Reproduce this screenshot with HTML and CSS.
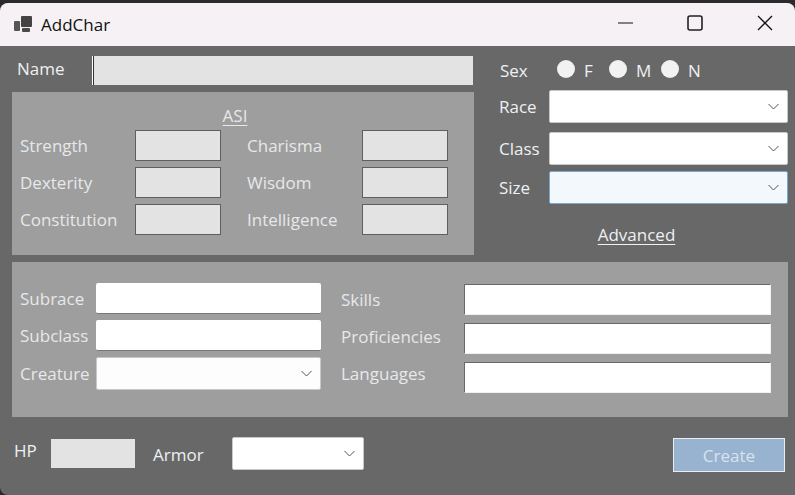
FILE: index.html
```html
<!DOCTYPE html>
<html>
<head>
    <title>AddChar</title>
    <link rel="stylesheet" href="styles.css">
</head>
<body>
    <div class="window">
        <div class="titlebar">
            <svg class="app-icon" width="18" height="16" viewBox="0 0 18 16">
                <rect x="0" y="5" width="6" height="10" rx="1" fill="#555"/>
                <rect x="7" y="0" width="11" height="11" rx="1" fill="#444"/>
                <rect x="8" y="12" width="8" height="4" rx="1" fill="#4a4a4a"/>
            </svg>
            <span class="app-name">AddChar</span>
            <div class="win-buttons">
                <svg width="16" height="16" viewBox="0 0 16 16"><path d="M1 8H16" stroke="#111" stroke-width="1.2" fill="none"/></svg>
                <svg width="16" height="16" viewBox="0 0 16 16"><rect x="1" y="1" width="14" height="14" rx="2" stroke="#222" stroke-width="1.6" fill="none"/></svg>
                <svg width="16" height="16" viewBox="0 0 16 16"><path d="M1 1L15 15M15 1L1 15" stroke="#111" stroke-width="1.3" fill="none"/></svg>
            </div>
        </div>

        <div class="form">
            <div class="top">
                <div class="left">
                    <div class="name-row">
                        <span class="name-label">Name</span>
                        <input class="name-input" type="text">
                    </div>
                    <div class="panel asi">
                        <div class="asi-title"><span class="link">ASI</span></div>
                        <div class="asi-grid">
                            <span>Strength</span><input class="box" type="text">
                            <span>Charisma</span><input class="box" type="text">
                            <span>Dexterity</span><input class="box" type="text">
                            <span>Wisdom</span><input class="box" type="text">
                            <span>Constitution</span><input class="box" type="text">
                            <span>Intelligence</span><input class="box" type="text">
                        </div>
                    </div>
                </div>

                <div class="right">
                    <div class="sex-row">
                        <span class="sex-label">Sex</span>
                        <div class="radio-item"><i class="radio"></i>F</div>
                        <div class="radio-item"><i class="radio"></i>M</div>
                        <div class="radio-item"><i class="radio"></i>N</div>
                    </div>
                    <div class="pick-row">
                        <span class="pick-label">Race</span>
                        <div class="combo">
                            <svg width="11" height="7" viewBox="0 0 11 7"><path d="M0.5 1L5.5 6L10.5 1" stroke="#555" fill="none"/></svg>
                        </div>
                    </div>
                    <div class="pick-row class-row">
                        <span class="pick-label">Class</span>
                        <div class="combo">
                            <svg width="11" height="7" viewBox="0 0 11 7"><path d="M0.5 1L5.5 6L10.5 1" stroke="#555" fill="none"/></svg>
                        </div>
                    </div>
                    <div class="pick-row size-row">
                        <span class="pick-label">Size</span>
                        <div class="combo combo-hover">
                            <svg width="11" height="7" viewBox="0 0 11 7"><path d="M0.5 1L5.5 6L10.5 1" stroke="#555" fill="none"/></svg>
                        </div>
                    </div>
                    <div class="advanced"><span class="link">Advanced</span></div>
                </div>
            </div>

            <div class="panel lower">
                <div class="lower-left">
                    <span>Subrace</span><input class="plain" type="text">
                    <span>Subclass</span><input class="plain" type="text">
                    <span>Creature</span>
                    <div class="combo">
                        <svg width="11" height="7" viewBox="0 0 11 7"><path d="M0.5 1L5.5 6L10.5 1" stroke="#555" fill="none"/></svg>
                    </div>
                </div>
                <div class="lower-labels">
                    <span>Skills</span>
                    <span>Proficiencies</span>
                    <span>Languages</span>
                </div>
                <div class="lower-inputs">
                    <input class="sunken" type="text">
                    <input class="sunken" type="text">
                    <input class="sunken" type="text">
                </div>
            </div>

            <div class="bottom">
                <span class="hp-label">HP</span>
                <input class="hp-input" type="text">
                <span class="armor-label">Armor</span>
                <div class="combo armor-combo">
                    <svg width="11" height="7" viewBox="0 0 11 7"><path d="M0.5 1L5.5 6L10.5 1" stroke="#555" fill="none"/></svg>
                </div>
                <button class="create">Create</button>
            </div>
        </div>
    </div>
</body>
</html>
```

FILE: styles.css
```css
* {
    box-sizing: border-box;
}

html {
    background: #2b2b2b;
}

body {
    margin: 0;
    font-family: "Open Sans", "Noto Sans", sans-serif;
    font-size: 17px;
    line-height: 24px;
    color: #eef0f2;
}

input {
    display: block;
    margin: 0;
    padding: 0;
    border-radius: 0;
    outline: none;
}

.window {
    height: 492px;
    margin-top: 3px;
    background: #686868;
    border-radius: 8px 8px 0 8px;
    overflow: hidden;
}

.titlebar {
    display: flex;
    align-items: center;
    height: 43px;
    padding-left: 14px;
    background: #f5f1f4;
    color: #111;
}

.app-icon {
    margin-bottom: 2px;
}

.app-name {
    margin-left: 9px;
    font-size: 17px;
}

.win-buttons {
    display: flex;
    gap: 54px;
    margin-left: auto;
    margin-right: 22px;
    margin-bottom: 3px;
}

.form {
    padding: 10px 7px 0 12px;
}

.top {
    display: flex;
}

.left {
    width: 462px;
}

.name-row {
    display: flex;
    align-items: center;
    height: 29px;
    margin-bottom: 7px;
    padding-left: 5px;
}

.name-label {
    width: 75px;
    margin-top: -4px;
}

.name-input {
    width: 381px;
    height: 29px;
    background: #e3e3e3;
    border: none;
    border-left: 1px solid #fff;
    box-shadow: inset 1px 0 0 #333;
}

.panel {
    background: #9e9e9e;
    color: #e6e8ea;
}

.asi {
    height: 163px;
    padding: 0 8px;
}

.asi-title {
    height: 38px;
    padding-top: 12px;
    padding-right: 16px;
    text-align: center;
}

.link {
    text-decoration: underline;
    text-decoration-thickness: 1px;
    text-underline-offset: 3px;
}

.asi-grid {
    display: grid;
    grid-template-columns: 115px 112px 115px 86px;
    grid-auto-rows: 31px;
    row-gap: 6px;
    align-items: center;
}

.box {
    width: 86px;
    height: 31px;
    background: #e3e3e3;
    border: 1px solid #5f5f5f;
}

.right {
    flex: 1;
    padding-left: 25px;
}

.sex-row {
    display: flex;
    align-items: center;
    height: 30px;
    margin-bottom: 4px;
    padding-left: 1px;
}

.sex-label {
    width: 57px;
}

.radio-item {
    display: flex;
    align-items: center;
    width: 52px;
    gap: 9px;
}

.radio {
    width: 18px;
    height: 18px;
    margin-top: -4px;
    border-radius: 50%;
    background: #f2f2f2;
}

.pick-row {
    display: flex;
    align-items: center;
}

.class-row {
    margin-top: 9px;
}

.size-row {
    margin-top: 6px;
}

.pick-label {
    width: 50px;
}

.combo {
    display: flex;
    align-items: center;
    justify-content: flex-end;
    width: 239px;
    height: 33px;
    padding-right: 8px;
    background: #fff;
    border: 1px solid #c8c8c8;
    border-radius: 2px;
}

.combo-hover {
    background: #f3f8fd;
    border-color: #7ba6d0;
}

.advanced {
    margin-top: 19px;
    padding-right: 14px;
    text-align: center;
}

.lower {
    display: flex;
    height: 155px;
    margin-top: 7px;
    padding: 21px 0 0 8px;
}

.lower-left {
    display: grid;
    grid-template-columns: 76px 225px;
    grid-template-rows: 31px 31px 33px;
    row-gap: 6px;
    align-items: center;
    align-content: start;
}

.lower-left .combo {
    width: 225px;
    background: #fdfdfd;
}

.plain {
    width: 225px;
    height: 31px;
    background: #fff;
    border: none;
    border-bottom: 1px solid #777;
    border-radius: 2px;
}

.lower-labels {
    display: flex;
    flex-direction: column;
    gap: 6px;
    width: 123px;
    margin-left: 20px;
}

.lower-labels span {
    height: 31px;
    line-height: 33px;
}

.lower-inputs {
    display: flex;
    flex-direction: column;
    gap: 8px;
    padding-top: 1px;
}

.sunken {
    width: 307px;
    height: 31px;
    background: #fff;
    border: 1px solid;
    border-color: #696969 #f0f0f0 #f0f0f0 #696969;
}

.bottom {
    display: flex;
    align-items: flex-start;
    padding-top: 20px;
    padding-left: 2px;
}

.hp-label {
    width: 37px;
    line-height: 28px;
}

.hp-input {
    width: 84px;
    height: 29px;
    margin-top: 2px;
    background: #e3e3e3;
    border: none;
}

.armor-label {
    width: 79px;
    margin-left: 18px;
    line-height: 36px;
}

.armor-combo {
    width: 132px;
}

.create {
    width: 112px;
    height: 34px;
    margin-top: 1px;
    margin-left: auto;
    margin-right: 3px;
    padding: 2px 0 0;
    background: #98b3d0;
    border: 1px solid #e8eef4;
    color: #d8e2ec;
    font: inherit;
}
```
